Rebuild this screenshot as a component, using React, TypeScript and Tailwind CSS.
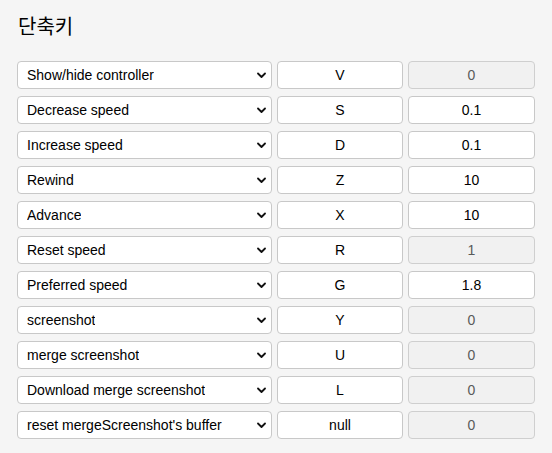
const rows: { label: string; key: string; value: string; disabled: boolean }[] = [
  { label: "Show/hide controller", key: "V", value: "0", disabled: true },
  { label: "Decrease speed", key: "S", value: "0.1", disabled: false },
  { label: "Increase speed", key: "D", value: "0.1", disabled: false },
  { label: "Rewind", key: "Z", value: "10", disabled: false },
  { label: "Advance", key: "X", value: "10", disabled: false },
  { label: "Reset speed", key: "R", value: "1", disabled: true },
  { label: "Preferred speed", key: "G", value: "1.8", disabled: false },
  { label: "screenshot", key: "Y", value: "0", disabled: true },
  { label: "merge screenshot", key: "U", value: "0", disabled: true },
  { label: "Download merge screenshot", key: "L", value: "0", disabled: true },
  { label: "reset mergeScreenshot's buffer", key: "null", value: "0", disabled: true },
];

function Chevron() {
  return (
    <svg width="9" height="8" viewBox="0 0 9 8" className="shrink-0">
      <path d="M1 2.5 L4.5 6 L8 2.5" fill="none" stroke="#111" strokeWidth="1.8" strokeLinecap="round" strokeLinejoin="round" />
    </svg>
  );
}

export default function App() {
  return (
    <div
      className="min-h-[453px] bg-[#f5f5f5] pl-[17px] pt-[12px] text-black"
      style={{ fontFamily: '"Liberation Sans", Arial, "Noto Sans CJK KR", sans-serif' }}
    >
      <h2 className="text-[20px] leading-[28px] ml-[1px]" style={{ fontFamily: '"Noto Sans CJK KR", sans-serif' }}>
        단축키
      </h2>
      <div className="mt-[21px] flex flex-col gap-[7px]">
        {rows.map((r) => (
          <div key={r.label} className="flex gap-[5px] text-[14px]">
            <div className="flex h-[28px] w-[255px] items-center justify-between rounded-[4px] border border-[#c8c8c8] bg-white pl-[9px] pr-[5px]">
              <span className="truncate pt-px">{r.label}</span>
              <Chevron />
            </div>
            <div className="flex h-[28px] w-[126px] items-center justify-center rounded-[4px] border border-[#c8c8c8] bg-white pt-px">
              {r.key}
            </div>
            <div
              className={
                r.disabled
                  ? "flex h-[28px] w-[127px] items-center justify-center rounded-[4px] border border-[#cfcfcf] bg-[#f1f1f1] pt-px text-[#5a5a5a]"
                  : "flex h-[28px] w-[127px] items-center justify-center rounded-[4px] border border-[#c8c8c8] bg-white pt-px"
              }
            >
              {r.value}
            </div>
          </div>
        ))}
      </div>
    </div>
  );
}
